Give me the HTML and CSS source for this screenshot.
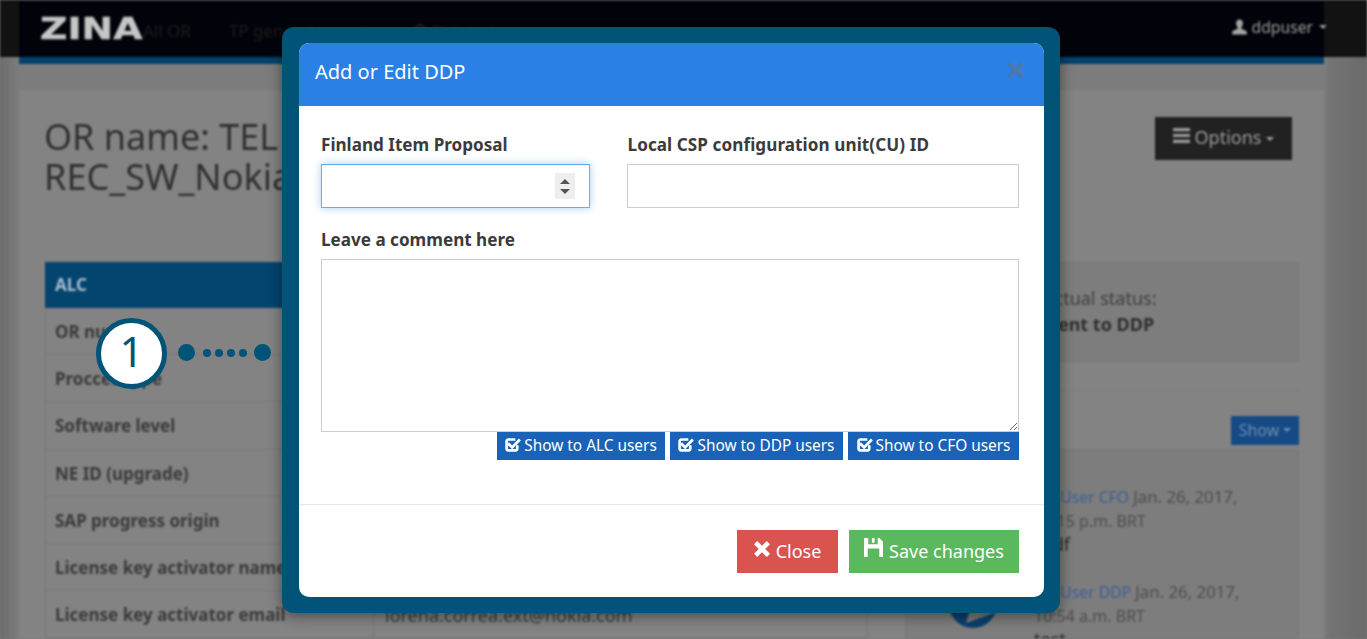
FILE: index.html
```html
<!DOCTYPE html>
<html lang="en">
<head>
<meta charset="utf-8">
<title>Add or Edit DDP</title>
<link rel="stylesheet" href="styles.css">
</head>
<body>
<div class="page">
  <header class="topbar">
    <nav class="nav">
      <span class="logo-box"><span class="logo">ZINA</span></span>
      <span class="nav-link">All OR</span>
      <span class="nav-link nav-report">TP general report</span>
      <span class="nav-link"><svg class="nav-i" viewBox="0 0 16 16"><circle cx="8" cy="8" r="6.500" fill="none" stroke="#1f1f1f" stroke-width="3"/></svg> Deleted</span>
      <span class="nav-user">
        <svg class="user-icon" viewBox="0 0 16 16"><path d="M8 0c2.300 0 3.600 1.700 3.600 4 0 1.800-.7 3.300-1.700 4.200v1.300c0 .8 4.600 1.300 5.600 3.300.3.800.4 1.900.4 3.200H.1c0-1.300.1-2.400.4-3.200 1-2 5.600-2.500 5.600-3.300V8.200C5.100 7.300 4.400 5.800 4.400 4 4.400 1.700 5.700 0 8 0z"/></svg>
        <span class="user-name">ddpuser</span><i class="caret"></i>
      </span>
    </nav>
  </header>
  <main class="panel">
    <section class="left">
      <h1 class="title">OR name: TEL<br>REC_SW_Nokia</h1>
      <div class="tbl">
        <div class="tbl-head">ALC</div>
        <div class="row"><b>OR number</b><span>5230</span></div>
        <div class="row"><b>Procces type</b><span>Upgrade</span></div>
        <div class="row"><b>Software level</b><span>SW</span></div>
        <div class="row"><b>NE ID (upgrade)</b><span>1</span></div>
        <div class="row"><b>SAP progress origin</b><span>Nokia</span></div>
        <div class="row"><b>License key activator name</b><span>Lorena Correa</span></div>
        <div class="row"><b>License key activator email</b><span>lorena.correa.ext@nokia.com</span></div>
      </div>
    </section>
    <section class="right">
      <div class="opt-wrap">
        <span class="btn-options">
          <svg class="bars" viewBox="0 0 16 14"><path d="M0 0h16v3H0zM0 5.500h16v3H0zM0 11h16v3H0z"/></svg>
          Options <i class="caret"></i>
        </span>
      </div>
      <div class="status">
        <div>Actual status:</div>
        <strong>Sent to DDP</strong>
      </div>
      <div class="comments-head"><span class="btn-show">Show <i class="caret"></i></span></div>
      <div class="comments">
        <div class="comment">
          <div class="avatar-slot"></div>
          <div class="comment-text">
            <p class="meta"><a class="who">My User CFO</a> <span class="date">Jan. 26, 2017,</span> 10:15 p.m. BRT</p>
            <p class="msg">asdf</p>
          </div>
        </div>
        <div class="comment">
          <div class="avatar-slot">
            <svg class="avatar" viewBox="0 0 48 48"><circle cx="24" cy="24" r="24" fill="#0b3f6e"/><path d="M17 43l3-10 20-17 8 8v8z" fill="#7b7b7b"/></svg>
          </div>
          <div class="comment-text">
            <p class="meta"><a class="who">My User DDP</a> <span class="date">Jan. 26, 2017,</span> 10:54 a.m. BRT</p>
            <p class="msg">test</p>
          </div>
        </div>
      </div>
    </section>
  </main>
</div>

<div class="callout">
  <span class="callout-num">1</span>
  <span class="dot dot-big"></span>
  <span class="dot"></span><span class="dot"></span><span class="dot"></span><span class="dot"></span>
  <span class="dot dot-big"></span>
</div>

<div class="modal-frame">
  <div class="modal">
    <div class="modal-head">
      <h2>Add or Edit DDP</h2>
      <span class="x">×</span>
    </div>
    <div class="modal-body">
      <div class="field-row">
        <div class="field">
          <label>Finland Item Proposal</label>
          <div class="input-wrap">
            <input class="input input-focus" type="text">
            <span class="spin"><i class="up"></i><i class="down"></i></span>
          </div>
        </div>
        <div class="field">
          <label class="label-wide">Local CSP configuration unit(CU) ID</label>
          <input class="input" type="text">
        </div>
      </div>
      <label class="comment-label">Leave a comment here</label>
      <textarea class="area"></textarea>
      <div class="checks">
        <span class="chk chk-alc"><svg class="chk-i" viewBox="1 1.500 15 14"><path d="M12.500 9.200v3.100c0 .9-.7 1.700-1.600 1.700H4.100c-.9 0-1.600-.8-1.600-1.700V5.500c0-.9.700-1.700 1.600-1.700h6.600" fill="none" stroke="#fff" stroke-width="2.500"/><path d="M4.800 6.500l2.900 2.900L14 2.800l1.900 1.900-8.200 8.200-4.800-4.500z" fill="#fff"/></svg>Show to ALC users</span>
        <span class="chk chk-ddp"><svg class="chk-i" viewBox="1 1.500 15 14"><path d="M12.500 9.200v3.100c0 .9-.7 1.700-1.600 1.700H4.100c-.9 0-1.600-.8-1.600-1.700V5.500c0-.9.700-1.700 1.600-1.700h6.600" fill="none" stroke="#fff" stroke-width="2.500"/><path d="M4.800 6.500l2.900 2.900L14 2.800l1.900 1.900-8.200 8.200-4.800-4.500z" fill="#fff"/></svg>Show to DDP users</span>
        <span class="chk chk-cfo"><svg class="chk-i" viewBox="1 1.500 15 14"><path d="M12.500 9.200v3.100c0 .9-.7 1.700-1.600 1.700H4.100c-.9 0-1.600-.8-1.600-1.700V5.500c0-.9.700-1.700 1.600-1.700h6.600" fill="none" stroke="#fff" stroke-width="2.500"/><path d="M4.800 6.500l2.900 2.900L14 2.800l1.900 1.900-8.200 8.200-4.800-4.500z" fill="#fff"/></svg>Show to CFO users</span>
      </div>
    </div>
    <div class="modal-foot">
      <span class="btn btn-close"><svg class="btn-i" viewBox="0 0 16 16"><path d="M3.200 0L8 4.800 12.800 0 16 3.200 11.200 8 16 12.800 12.800 16 8 11.200 3.200 16 0 12.800 4.800 8 0 3.200z" fill="#fff"/></svg>Close</span>
      <span class="btn btn-save"><svg class="btn-i btn-floppy" viewBox="0 0 18 18"><path fill="#fff" fill-rule="evenodd" d="M0 0h14.500L18 3.500V18H0zM4 0v6h9V0h-3v4.500H7.500V0zM3.500 10v8h11v-8z"/></svg>Save changes</span>
    </div>
  </div>
</div>
</body>
</html>
```

FILE: styles.css
```css
* { box-sizing: border-box; }
html, body { margin: 0; height: 100%; overflow: hidden; }
body {
  position: relative;
  font-family: "Noto Sans", "Open Sans", sans-serif;
  background: #7b7b7b;
}
.page {
  height: 639px;
  overflow: hidden;
  filter: blur(0.8px);
  background: linear-gradient(90deg, #6c6c6c 0, #7c7c7c 19px, #7c7c7c 1324px, #747474 1330px, #6a6a6a 100%);
}
.topbar {
  padding: 0 43px 0 19px;
  background: linear-gradient(#121212 57px, transparent 57px);
}
.nav {
  height: 64px;
  display: flex;
  align-items: flex-start;
  padding-top: 18px;
  background: #00040a;
  border-bottom: 7px solid #04426d;
  border-top: 1px solid #1a1a1a;
  font-size: 17px;
  color: #1c1c1c;
}
.logo-box { width: 124px; height: 22px; display: block; }
.logo {
  display: block;
  margin: -1px 0 0 20.500px;
  width: 82px;
  font: 700 30.500px/22px "DejaVu Sans", sans-serif;
  color: #c6c6c6;
  -webkit-text-stroke: 0.4px #c6c6c6;
  transform: scaleX(1.24);
  transform-origin: left center;
}
.nav-link { line-height: 24px; margin-right: 38px; }
.nav-report { margin-right: 45px; }
.nav-i { width: 14px; height: 14px; vertical-align: -1px; }
.nav-user {
  margin-left: auto;
  display: flex;
  align-items: center;
  color: #9a9a9a;
  font-size: 15.700px;
  line-height: 16px;
  margin-right: -3px;
}
.user-icon { width: 15px; height: 16px; fill: #a5a5a5; margin-right: 5px; }
.user-name { margin-right: 6px; }
.caret {
  display: inline-block;
  width: 0;
  height: 0;
  border-top: 4px solid currentColor;
  border-left: 4px solid transparent;
  border-right: 4px solid transparent;
  vertical-align: middle;
}
.panel {
  margin: 26px 43px 0 19px;
  height: 560px;
  background: #838383;
  padding: 27px 25px 0 26px;
  display: flex;
  gap: 37px;
  color: #333;
}
.left { width: 823px; flex: none; }
.title { margin: 0 0 65px -1px; font-size: 36px; font-weight: 400; line-height: 40px; color: #303030; white-space: nowrap; }
.tbl-head { height: 46px; padding: 0 10px; line-height: 46px; background: #044570; color: #a9bccb; font-weight: 700; font-size: 17px; }
.row {
  display: flex;
  height: 47.200px;
  border: 1px solid #777;
  border-top: 0;
  font-size: 17px;
  line-height: 48px;
}
.row b { width: 328px; flex: none; padding-left: 9px; color: #3a3a3a; border-right: 1px solid #777; white-space: nowrap; }
.row span { padding-left: 11px; color: #3a3a3a; font-size: 18px; }
.right { flex: 1; min-width: 0; }
.opt-wrap { height: 145px; display: flex; justify-content: flex-end; padding-right: 7px; }
.btn-options {
  height: 43px;
  width: 137px;
  display: flex;
  align-items: center;
  justify-content: center;
  gap: 5px;
  padding-bottom: 4px;
  background: #212121;
  color: #9b9b9b;
  font-size: 18px;
}
.btn-options .caret { margin-top: 4px; }
.bars { width: 17px; height: 15px; fill: #9b9b9b; margin-top: -2px; }
.status {
  height: 100px;
  padding: 22px 0 0 137px;
  background: #7d7d7d;
  border: 1px solid #777;
  font-size: 18px;
  line-height: 26px;
  color: #3f3f3f;
}
.status strong { color: #2e2e2e; display: block; padding-left: 5px; }
.comments-head {
  margin-top: 28px;
  height: 59px;
  padding-top: 25px;
  display: flex;
  justify-content: flex-end;
  border-top: 1px solid #7b7b7b;
}
.btn-show {
  width: 68px;
  height: 29px;
  display: flex;
  align-items: center;
  justify-content: center;
  gap: 4px;
  padding-bottom: 2px;
  background: #154a84;
  color: #6f8fb3;
  font-size: 16px;
}
.comments { border: 1px solid #777; background: #7d7d7d; height: 220px; padding: 35px 0 0 0; }
.comment { display: flex; height: 95px; }
.avatar-slot { width: 128px; flex: none; padding: 0 0 0 43px; }
.avatar { width: 48px; height: 48px; display: block; }
.comment-text { width: 236px; }
.meta { margin: 0; font-size: 16px; line-height: 24px; color: #4d4d4d; }
.who { color: #3b5f94; font-size: 15.700px; }
.date { font-size: 16.800px; }
.msg { margin: 0; font-size: 18px; line-height: 23px; color: #2a2a2a; }

/* callout */
.callout {
  position: absolute;
  left: 96px;
  top: 318px;
  height: 71px;
  display: flex;
  align-items: center;
}
.callout-num {
  width: 71px;
  height: 71px;
  border: 5.500px solid #015478;
  border-radius: 50%;
  background: #fff;
  color: #015478;
  font-size: 42px;
  font-weight: 400;
  line-height: 56px;
  text-align: center;
  margin-right: 11px;
}
.dot { width: 8px; height: 8px; border-radius: 50%; background: #015478; margin: 0 4px 2px 0; }
.dot-big { width: 17px; height: 17px; margin-right: 8px; }
.dot-big:last-child { margin: 0 0 2px 3px; }

/* modal */
.modal-frame {
  position: absolute;
  left: 282px;
  top: 27px;
  width: 778px;
  height: 586px;
  padding: 16px 16px 16px 17px;
  background: #015478;
  border-radius: 12px;
  box-shadow: 0 3px 14px rgba(0, 0, 0, .45);
}
.modal { height: 100%; background: #fff; border-radius: 10px; display: flex; flex-direction: column; overflow: hidden; }
.modal-head {
  height: 63px;
  flex: none;
  display: flex;
  align-items: center;
  justify-content: space-between;
  padding: 0 19px 7px 16px;
  background: #2a80e4;
}
.modal-head h2 { margin: 0; color: #fff; font-size: 20px; font-weight: 400; }
.x { color: #4c78ae; font: 700 30px/1 "Liberation Sans", sans-serif; -webkit-text-stroke: 1px #4c78ae; margin-top: -3px; }
.modal-body { height: 399px; flex: none; padding: 24px 25px 0 22px; border-bottom: 1px solid #e5e5e5; }
.field-row { display: flex; gap: 37px; }
.field:first-child { width: 269px; flex: none; }
.field:last-child { flex: 1; }
label { display: block; font-size: 17.100px; font-weight: 700; line-height: 30px; margin-bottom: 4px; color: #3b3b3b; white-space: nowrap; }
.label-wide { margin-left: 0.500px; letter-spacing: 0.080px; }
.input-wrap { position: relative; }
.input { display: block; width: 100%; height: 44px; border: 1px solid #ccc; background: #fff; outline: 0; padding: 0 12px; }
.input-focus { border-color: #66afe9; box-shadow: inset 0 1px 1px rgba(0,0,0,.075), 0 0 8px rgba(102,175,233,.6); }
.spin {
  position: absolute;
  right: 15px;
  top: 9px;
  width: 20px;
  height: 26px;
  background: #eee;
  display: flex;
  flex-direction: column;
  align-items: center;
  justify-content: center;
  gap: 5px;
}
.up, .down { width: 0; height: 0; border-left: 5px solid transparent; border-right: 5px solid transparent; }
.up { border-bottom: 5px solid #555; }
.down { border-top: 5px solid #555; }
.comment-label { margin-top: 17px; margin-bottom: 4px; }
.area { display: block; width: 100%; height: 173px; border: 1px solid #ccc; outline: 0; background: #fff; margin: 0; }
.checks { display: flex; justify-content: flex-end; gap: 5px; }
.chk {
  height: 28px;
  display: flex;
  align-items: center;
  justify-content: center;
  gap: 3px;
  padding: 0 0 2px 0;
  background: #1a62b7;
  color: #fff;
  font-size: 15.400px;
  white-space: nowrap;
}
.chk-alc { width: 168px; }
.chk-ddp { width: 173px; }
.chk-cfo { width: 171px; }
.chk-i { width: 16px; height: 15px; margin-top: -2px; }
.modal-foot { flex: 1; display: flex; justify-content: flex-end; gap: 11px; padding: 25px 25px 0 0; }
.btn {
  height: 43px;
  display: flex;
  align-items: center;
  justify-content: center;
  gap: 6px;
  padding-bottom: 2px;
  color: #fff;
  font-size: 18px;
}
.btn-close { width: 101px; background: #d9534f; }
.btn-save { width: 170px; background: #5cb85c; }
.btn-i { width: 16px; height: 16px; margin-top: -3px; }
.btn-floppy { width: 19px; height: 19px; margin-top: -6px; }
```
